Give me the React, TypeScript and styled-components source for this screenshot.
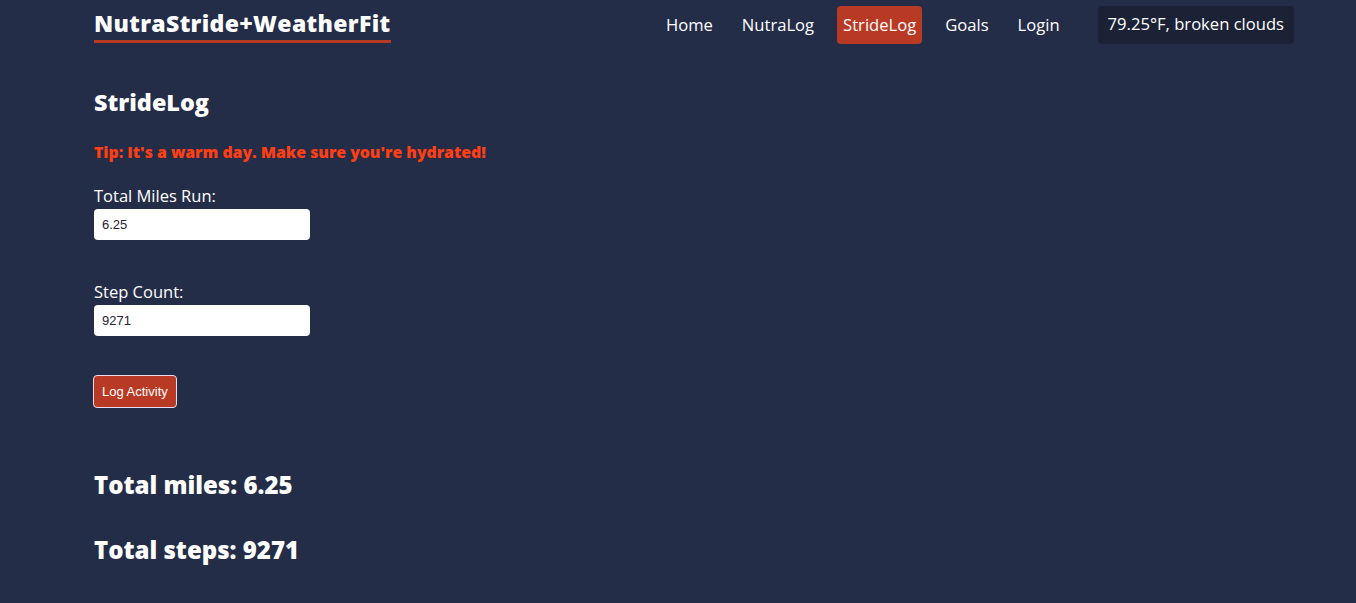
import React from "react";
import styled, { createGlobalStyle } from "styled-components";

const GlobalStyle = createGlobalStyle`
  html, body {
    margin: 0;
    padding: 0;
    background: #242d48;
  }
  body {
    font-family: "Open Sans", "Liberation Sans", sans-serif;
    color: #ffffff;
    min-height: 603px;
  }
`;

const Page = styled.div`
  width: 1200px;
  padding-left: 94px;
  box-sizing: content-box;
`;

const Header = styled.header`
  display: flex;
  justify-content: space-between;
  align-items: flex-start;
  padding-top: 6px;
`;

const Logo = styled.h1`
  margin: 0;
  font-size: 23px;
  font-weight: 800;
  line-height: 34px;
  letter-spacing: 0.35px;
  border-bottom: 3px solid #b93a24;
`;

const NavArea = styled.div`
  display: flex;
  align-items: center;
  gap: 32px;
`;

const NavList = styled.nav`
  display: flex;
  align-items: center;
  gap: 17px;
`;

const NavLink = styled.a<{ $active?: boolean }>`
  display: block;
  padding: 0 6px;
  height: 38px;
  line-height: 38px;
  font-size: 16.6px;
  color: #ffffff;
  text-decoration: none;
  border-radius: 4px;
  background: ${(p) => (p.$active ? "#b93a24" : "transparent")};
`;

const Weather = styled.div`
  height: 38px;
  line-height: 36px;
  padding: 0 10px;
  font-size: 16.6px;
  background: #1c2236;
  border-radius: 4px;
`;

const Main = styled.main`
  display: flex;
  flex-direction: column;
  align-items: flex-start;
  margin-top: 43px;
`;

const Title = styled.h2`
  margin: 0;
  font-size: 23.4px;
  font-weight: 800;
  line-height: 30px;
`;

const Tip = styled.p`
  margin: 23px 0 0;
  font-size: 15.8px;
  font-weight: 800;
  line-height: 24px;
  color: #ff3f13;
`;

const Field = styled.label<{ $gap: number }>`
  display: flex;
  flex-direction: column;
  margin-top: ${(p) => p.$gap}px;
  font-size: 16.5px;
  line-height: 24px;
`;

const Input = styled.input`
  margin-top: 1px;
  width: 216px;
  height: 31px;
  box-sizing: border-box;
  border: none;
  border-radius: 4px;
  padding: 0 8px;
  font-family: "Liberation Sans", Arial, sans-serif;
  font-size: 13px;
  color: #1e2233;
  background: #ffffff;
  outline: none;
`;

const Button = styled.button`
  margin-top: 39px;
  margin-left: -1px;
  height: 33px;
  padding: 0 8px;
  background: #b93a24;
  color: #ffffff;
  border: 1.5px solid #e8dcef;
  border-radius: 4px;
  font-family: "Liberation Sans", Arial, sans-serif;
  font-size: 13px;
  cursor: pointer;
`;

const Total = styled.h3<{ $gap: number }>`
  margin: ${(p) => p.$gap}px 0 0;
  font-size: 24px;
  font-weight: 800;
  line-height: 32px;
`;

export default function App() {
  return (
    <>
      <GlobalStyle />
      <Page>
        <Header>
          <Logo>NutraStride+WeatherFit</Logo>
          <NavArea>
            <NavList>
              <NavLink href="#">Home</NavLink>
              <NavLink href="#">NutraLog</NavLink>
              <NavLink href="#" $active>
                StrideLog
              </NavLink>
              <NavLink href="#">Goals</NavLink>
              <NavLink href="#">Login</NavLink>
            </NavList>
            <Weather>79.25°F, broken clouds</Weather>
          </NavArea>
        </Header>
        <Main>
          <Title>StrideLog</Title>
          <Tip>Tip: It's a warm day. Make sure you're hydrated!</Tip>
          <Field $gap={20}>
            Total Miles Run:
            <Input defaultValue="6.25" />
          </Field>
          <Field $gap={40}>
            Step Count:
            <Input defaultValue="9271" />
          </Field>
          <Button>Log Activity</Button>
          <Total $gap={61}>Total miles: 6.25</Total>
          <Total $gap={33}>Total steps: 9271</Total>
        </Main>
      </Page>
    </>
  );
}
